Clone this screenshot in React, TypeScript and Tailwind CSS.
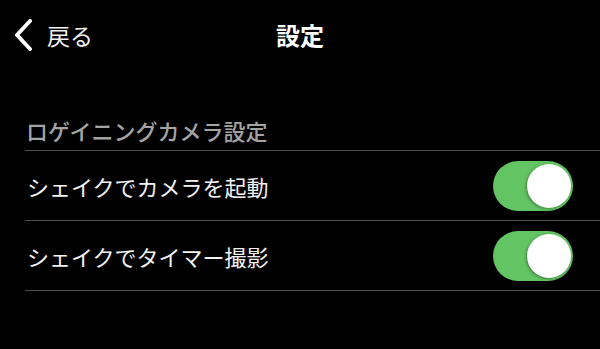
import React from "react";

const ROWS = ["シェイクでカメラを起動", "シェイクでタイマー撮影"];

function Toggle() {
  return (
    <div className="relative w-[80px] h-[50px] rounded-full bg-[#62c462] shrink-0">
      <div className="absolute right-[2px] top-[3px] w-[44px] h-[44px] rounded-full bg-white shadow-[-1px_1px_3px_rgba(0,0,0,0.35)]" />
    </div>
  );
}

export default function App() {
  return (
    <div
      className="w-[600px] h-[349px] bg-black text-white overflow-hidden"
      style={{ fontFamily: '"Noto Sans CJK JP", "Noto Sans", sans-serif' }}
    >
      {/* nav bar */}
      <div className="relative h-[70px] flex items-center">
        <div className="flex items-center pl-[13px] gap-[14px]">
          <svg width="20" height="32" viewBox="0 0 20 32" fill="none">
            <polyline points="17,2 4,16 17,30" stroke="white" strokeWidth="4" strokeLinecap="round" strokeLinejoin="round" />
          </svg>
          <span className="text-[23px] leading-none text-[#f0f0f0]">戻る</span>
        </div>
        <div className="absolute inset-0 flex items-center justify-center pointer-events-none">
          <span className="text-[24px] leading-none font-bold">設定</span>
        </div>
      </div>

      {/* section */}
      <div className="pl-[25px]">
        <div className="h-[80px] flex items-end pb-[9px] pl-[1px] text-[22px] leading-none font-medium text-[#a3a3a3]">
          ロゲイニングカメラ設定
        </div>
        <div className="border-t border-[#505050]">
          {ROWS.map((label) => (
            <div
              key={label}
              className="h-[70px] flex items-center justify-between pr-[27px] border-b border-[#505050]"
            >
              <span className="pl-[2px] text-[22px] leading-none text-[#f2f2f2]">{label}</span>
              <Toggle />
            </div>
          ))}
        </div>
      </div>
    </div>
  );
}
